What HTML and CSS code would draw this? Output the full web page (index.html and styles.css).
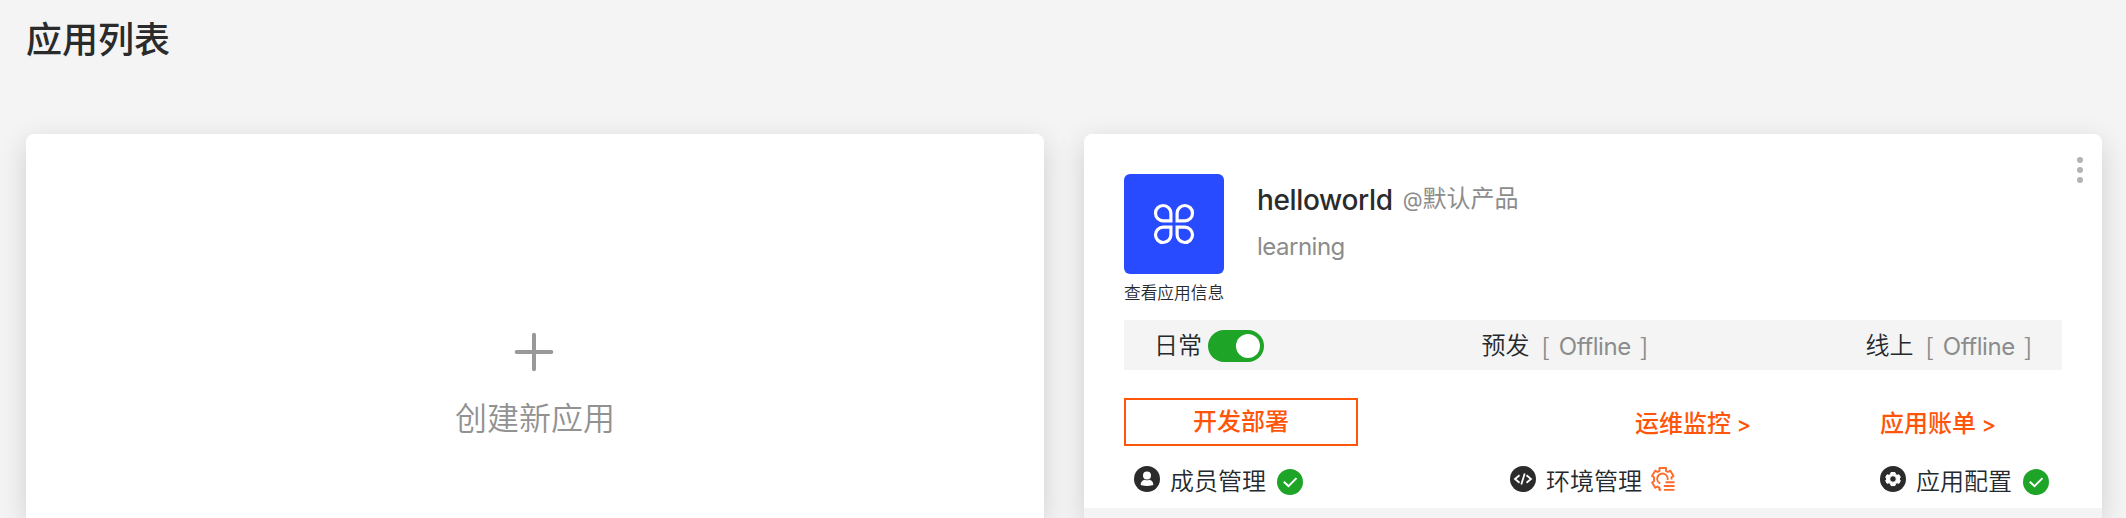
FILE: index.html
```html
<!DOCTYPE html>
<html lang="zh-CN">
<head>
<meta charset="utf-8">
<title>应用列表</title>
<link rel="stylesheet" href="styles.css">
</head>
<body>
<h1 class="page-title">应用列表</h1>
<main class="cards">
  <section class="card create">
    <svg class="plus" width="40" height="40" viewBox="0 0 40 40" fill="none" stroke="#999" stroke-width="4" stroke-linecap="round"><path d="M20 2.700v34.600M2.700 20h34.600"/></svg>
    <span class="create-label">创建新应用</span>
  </section>
  <section class="card app">
    <button class="more" aria-label="more"><i></i><i></i><i></i></button>
    <header class="head">
      <div class="logo-col">
        <div class="logo">
          <svg width="42" height="42" viewBox="0 0 42 42" fill="none" stroke="#fff" stroke-width="3.2" stroke-linejoin="miter"><path d="M17.9 17.9H10.300A7.700 7.700 0 1 1 17.900 10.300ZM24.100 17.900V10.300A7.700 7.700 0 1 1 31.700 17.900ZM17.900 24.100V31.700A7.700 7.700 0 1 1 10.300 24.100ZM24.100 24.100H31.700A7.700 7.700 0 1 1 24.100 31.700Z"/></svg>
        </div>
        <a class="info-link">查看应用信息</a>
      </div>
      <div class="meta">
        <div class="name-row"><span class="name">helloworld</span><span class="product"><span class="at">@</span>默认产品</span></div>
        <div class="desc">learning</div>
      </div>
    </header>
    <div class="envs">
      <div class="env"><span class="env-name">日常</span><span class="switch"></span></div>
      <div class="env"><span class="env-name">预发</span><span class="state"><b>[</b><span>Offline</span><b>]</b></span></div>
      <div class="env"><span class="env-name">线上</span><span class="state"><b>[</b><span>Offline</span><b>]</b></span></div>
    </div>
    <div class="actions">
      <a class="deploy">开发部署</a>
      <a class="link monitor">运维监控 <span>&gt;</span></a>
      <a class="link bill">应用账单 <span>&gt;</span></a>
    </div>
    <div class="manage">
      <div class="item member">
        <svg class="icon" width="26" height="26" viewBox="0 0 26 26"><circle cx="13" cy="13" r="13" fill="#2b2b2b"/><circle cx="13" cy="9.6" r="4" fill="#fff"/><path d="M6.7 17.9c.4-2.5 2.1-3.7 3.9-4.2a5 5 0 0 0 4.8 0c1.8.5 3.5 1.700 3.900 4.200c.1.800-.3 1.100-1.100 1.300-3.400.9-7 .9-10.400 0-.8-.2-1.200-.5-1.100-1.300z" fill="#fff"/></svg>
        <span class="label">成员管理</span>
        <svg class="check" width="26" height="26" viewBox="0 0 26 26"><circle cx="13" cy="13" r="13" fill="#1ea427"/><path d="M6.800 12.700l4.700 4.400 8-8" fill="none" stroke="#fff" stroke-width="2"/></svg>
      </div>
      <div class="item environment">
        <svg class="icon" width="26" height="26" viewBox="0 0 26 26"><circle cx="13" cy="13" r="13" fill="#2b2b2b"/><path d="M9.500 9.200L5 13l4.500 3.800M16.500 9.200L21 13l-4.500 3.800M14.700 7.500l-3.400 11" fill="none" stroke="#fff" stroke-width="1.800"/></svg>
        <span class="label">环境管理</span>
        <svg class="pending" width="24" height="24" viewBox="0 0 24 24" fill="none" stroke="#ff6a2b" stroke-width="1.900" stroke-linejoin="round"><path d="M10.200 22.800H8.300v-2.300L6.500 19.500 4.200 20.800 1.100 15.600 3 14.300v-4L1 9l3.200-5.300 2.300 1.300 2-1.100V1h6.500v2.900l2 1.100 2.300-1.300L22.500 9l-2 1.300v2.200M9.300 16.500A5.200 5.200 0 1 1 16.500 13"/><path d="M14.500 15.200H23.500M12.800 19H23.500M12.800 22.900H23.500" stroke-width="1.900"/></svg>
      </div>
      <div class="item config">
        <svg class="icon" width="26" height="26" viewBox="0 0 26 26"><circle cx="13" cy="13" r="13" fill="#2b2b2b"/><path fill-rule="evenodd" fill="#fff" stroke="#fff" stroke-linejoin="round" d="M11 6.500h4l.6 2 1.400.8 2-.5 1.300 2.500-1.200 1.700 1.200 1.700-1.300 2.600-2-.5-1.400.8-.6 2h-4l-.6-2-1.400-.8-2 .5-1.300-2.600 1.200-1.700-1.200-1.700L7 8.800l2 .5 1.400-.8zM13 9.700a3.300 3.300 0 1 0 0 6.600a3.300 3.300 0 1 0 0-6.600z"/></svg>
        <span class="label">应用配置</span>
        <svg class="check" width="26" height="26" viewBox="0 0 26 26"><circle cx="13" cy="13" r="13" fill="#1ea427"/><path d="M6.800 12.700l4.700 4.400 8-8" fill="none" stroke="#fff" stroke-width="2"/></svg>
      </div>
    </div>
    <footer class="foot"></footer>
  </section>
</main>
</body>
</html>
```

FILE: styles.css
```css
* { box-sizing: border-box; }
html, body { height: 100%; }
body {
  margin: 0;
  padding: 14px 24px 0 26px;
  overflow: hidden;
  background: #f4f4f4;
  color: #24292e;
  font-family: Inter, "Noto Sans CJK SC", sans-serif;
  font-size: 24px;
}
.page-title {
  margin: 0 0 68px;
  height: 52px;
  line-height: 52px;
  font-size: 36px;
  font-weight: 500;
  color: #2b2b2b;
}
.cards { display: grid; grid-template-columns: 1018px 1018px; gap: 40px; }
.card {
  height: 384px;
  background: #fff;
  border-radius: 8px 8px 0 0;
  box-shadow: 0 8px 28px rgba(0, 0, 0, .15);
}
.create {
  display: flex;
  flex-direction: column;
  align-items: center;
  padding-top: 198px;
  color: #929292;
}
.plus { display: block; margin-right: 2px; }
.create-label { margin-top: 23px; line-height: 48px; font-size: 32px; font-weight: 350; }
.app { position: relative; padding-top: 40px; }
.more {
  position: absolute;
  top: 23px;
  right: 19px;
  display: flex;
  flex-direction: column;
  gap: 4px;
  padding: 0;
  border: 0;
  background: none;
}
.more i { width: 6px; height: 6px; border-radius: 50%; background: #b3b3b3; }
.head { display: flex; height: 146px; padding-left: 40px; }
.logo-col { width: 133px; }
.logo {
  display: flex;
  align-items: center;
  justify-content: center;
  width: 100px;
  height: 100px;
  border-radius: 6px;
  background: #284bff;
}
.info-link { display: block; margin-top: 6px; line-height: 26px; font-size: 16.700px; font-weight: 350; white-space: nowrap; }
.name-row { display: flex; align-items: center; height: 40px; margin-top: 6px; line-height: 40px; }
.name { font-size: 28px; font-weight: 500; letter-spacing: -.35px; color: #2b2b2b; }
.product { margin: -1px 0 0 10px; color: #8c8c8c; }
.at { font-size: 20.500px; }
.desc { margin-top: 8px; line-height: 37px; letter-spacing: -.5px; color: #8c8c8c; font-weight: 400; }
.envs {
  display: flex;
  justify-content: space-between;
  height: 50px;
  margin: 0 40px;
  padding: 2px 30px 0;
  background: #f4f4f4;
}
.env { display: flex; align-items: center; }
.env-name { line-height: 48px; font-weight: 350; }
.switch {
  display: flex;
  align-items: center;
  justify-content: flex-end;
  width: 56px;
  height: 32px;
  margin-left: 6px;
  padding: 0 4px;
  border-radius: 16px;
  background: #1ea427;
}
.switch::after { content: ""; width: 24px; height: 24px; border-radius: 50%; background: #fff; }
.state { display: flex; align-items: center; margin-left: 12px; color: #8c8c8c; font-weight: 400; }
.state b { font-family: "Noto Sans CJK SC", sans-serif; font-weight: 400; line-height: 48px; }
.state span { margin: 0 9px; letter-spacing: -.4px; }
.actions {
  display: grid;
  grid-template-columns: 511px 245px auto;
  grid-template-rows: 48px;
  height: 48px;
  margin: 28px 40px 0;
  color: #ff550a;
  font-weight: 500;
}
.deploy { width: 234px; border: 2px solid #ff550a; line-height: 44px; text-align: center; }
.link { line-height: 52px; }
.link span { margin-left: -1px; font-size: 22px; }
.manage {
  display: grid;
  grid-template-columns: 376px 370px auto;
  height: 62px;
  padding: 18px 0 0 50px;
}
.item { display: flex; align-items: flex-start; height: 36px; }
.icon { margin-top: 2px; }
.label { margin-left: 10px; line-height: 36px; font-weight: 350; }
.check { margin: 5px 0 0 11px; }
.pending { margin: 3px 0 0 9px; }
.foot { height: 10px; background: #f4f4f4; }
```
